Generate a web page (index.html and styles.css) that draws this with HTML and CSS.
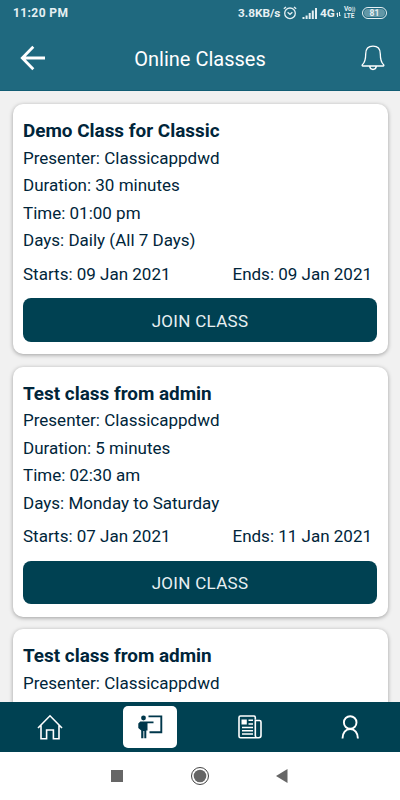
FILE: index.html
```
<!DOCTYPE html>
<html lang="en">
<head>
    <meta charset="UTF-8">
    <meta name="viewport" content="width=device-width, initial-scale=1">
    <title>Online Classes</title>
    <link rel="stylesheet" href="styles.css">
</head>
<body>
    <header>
        <div class="status-bar">
            <span class="clock">11:20 PM</span>
            <span class="speed">3.8KB/s</span>
            <svg class="alarm" width="14" height="14" viewBox="0 0 14 14">
                <circle cx="7" cy="7.3" r="5.3" />
                <path d="M4.6 6.2L7 8.3l2.4-2.1M.8 2.8L3 .9M13.2 2.8L11 .9" />
            </svg>
            <svg class="signal" width="16" height="12" viewBox="0 0 16 12">
                <path d="M.5 10h2v2h-2zM3.6 8.500h2V12h-2zM6.700 6h2v6h-2zM9.800 3.500h2V12h-2zM13 1h2v11h-2z" />
            </svg>
            <span class="network">4G</span>
            <svg class="data" width="5" height="5" viewBox="0 0 5 5">
                <path d="M1.500 5V1L.3 2.200M3.500 0v4l1.200-1.200" />
            </svg>
            <span class="volte"><span>Vo<i>))</i></span><span>LTE</span></span>
            <span class="battery"><span>81</span></span>
        </div>
        <div class="title-bar">
            <svg class="back" width="26" height="26" viewBox="0 0 26 26">
                <path d="M25 13H2.500M13.300 1.800L2.300 13l11 11.200" />
            </svg>
            <h1>Online Classes</h1>
            <svg class="bell" width="24" height="26" viewBox="0 0 24 26">
                <path d="M12 1.200c-4.700 0-7.300 3.200-7.300 7.800 0 5.500-.7 8.500-3.400 10.800-.4.500-.2 1.200.5 1.200h20.400c.7 0 .9-.7.5-1.200-2.700-2.300-3.400-5.300-3.400-10.800 0-4.600-2.600-7.800-7.300-7.800zM8.600 21.200c.3 2 1.500 3.300 3.400 3.300s3.100-1.300 3.400-3.300" />
            </svg>
        </div>
    </header>

    <main>
        <div class="card">
            <h2>Demo Class for Classic</h2>
            <p>Presenter: Classicappdwd</p>
            <p>Duration: 30 minutes</p>
            <p>Time: 01:00 pm</p>
            <p>Days: Daily (All 7 Days)</p>
            <div class="dates">
                <span>Starts: 09 Jan 2021</span>
                <span>Ends: 09 Jan 2021</span>
            </div>
            <button>JOIN CLASS</button>
        </div>
        <div class="card">
            <h2>Test class from admin</h2>
            <p>Presenter: Classicappdwd</p>
            <p>Duration: 5 minutes</p>
            <p>Time: 02:30 am</p>
            <p>Days: Monday to Saturday</p>
            <div class="dates">
                <span>Starts: 07 Jan 2021</span>
                <span>Ends: 11 Jan 2021</span>
            </div>
            <button>JOIN CLASS</button>
        </div>
        <!-- Cut off by the tab bar -->
        <div class="card">
            <h2>Test class from admin</h2>
            <p>Presenter: Classicappdwd</p>
        </div>
    </main>

    <nav class="tabs">
        <a class="tab">
            <svg width="28" height="28" viewBox="0 0 28 28">
                <path d="M2 15L14 2.800 26 15M5 12.500v13.200h5.600v-8.700h6.800v8.700H23V12.500" />
            </svg>
        </a>
        <a class="tab active">
            <svg width="26" height="26" viewBox="0 0 26 26">
                <circle class="solid" cx="6.500" cy="4" r="2.400" />
                <path class="solid" d="M3.300 7.500H16.500v1.700H10.500v7.300H9.300v7.800H7.300v-7.300h-.9v7.300H4.200V16.500L1.300 14V9.500z" />
                <path d="M11.500 2.400h12.800v15.900H12.500" />
            </svg>
        </a>
        <a class="tab">
            <svg width="26" height="26" viewBox="0 0 26 26">
                <path d="M18.300 5.500V3.500c0-1-.5-1.500-1.500-1.500H3.500C2.500 2 2 2.500 2 3.500v18.700c0 1 .6 1.600 1.600 1.600h18.200c1.400 0 2.200-.8 2.200-2.200V8c0-1-.5-1.500-1.500-1.500h-4.200v15c0 1.500.8 2.300 2 2.300" />
                <path class="solid" d="M4.500 5.500h5.300v5H4.500z" />
                <path d="M11.500 6.200H16M11.500 10H16M5 13.500h11M5 16.800h11M5 20h11" />
            </svg>
        </a>
        <a class="tab person">
            <svg width="24" height="26" viewBox="0 0 24 26">
                <circle cx="12.200" cy="8.500" r="6.300" />
                <path d="M4.500 24.500c0-5.500 3.200-9.500 7.700-9.500s7.700 4 7.700 9.500" />
            </svg>
        </a>
    </nav>

    <footer class="system-nav">
        <svg width="14" height="14" viewBox="0 0 14 14"><path d="M1 1h12v12H1z" /></svg>
        <svg width="20" height="20" viewBox="0 0 20 20"><circle class="ring" cx="10" cy="10" r="8.500" /><circle cx="10" cy="10" r="6.300" /></svg>
        <svg width="14" height="16" viewBox="0 0 14 16"><path d="M1 8l11.500-7v14z" /></svg>
    </footer>
</body>
</html>
```
FILE: styles.css
```
* {
    box-sizing: border-box;
}
body {
    display: flex;
    flex-direction: column;
    height: 100vh;
    margin: 0;
    overflow: hidden;
    background-color: #f1f1f1;
    color: #00253a;
    font-family: Roboto, sans-serif;
}
svg {
    flex: none;
    fill: none;
    stroke: #fff;
}
header {
    flex: none;
    height: 91px;
    background-color: #1f697f;
    border-bottom: 1px solid #125d74;
    color: #fff;
}
.status-bar {
    display: flex;
    align-items: center;
    height: 25px;
    padding: 0 13px;
    font-size: 12px;
    font-weight: bold;
    color: #e6f0f3;
}
.status-bar svg {
    stroke: #e6f0f3;
}
.status-bar .alarm {
    stroke-width: 1.3;
}
.clock {
    flex: 1;
    letter-spacing: 0.4px;
}
.speed {
    width: 45px;
    font-size: 11.8px;
}
.signal {
    margin-left: 5px;
}
.status-bar .signal path {
    fill: #e6f0f3;
    stroke: none;
}
.network {
    width: 15px;
    margin-left: 2px;
    font-size: 11.8px;
}
.data {
    align-self: flex-end;
    margin: 0 3px 8px 1px;
}
.volte {
    display: flex;
    flex-direction: column;
    width: 18px;
    font-size: 6.5px;
    line-height: 7px;
}
.volte i {
    font-size: 5px;
    font-style: normal;
    line-height: 1;
}
.battery {
    display: flex;
    width: 25px;
    height: 12px;
    padding: 1px;
    border: 1px solid #e6f0f3;
    border-radius: 6px;
}
.battery span {
    flex: 1;
    border-radius: 4px;
    background-color: #6297a6;
    font-size: 8.5px;
    line-height: 9px;
    text-align: center;
}
.title-bar {
    display: flex;
    align-items: center;
    justify-content: space-between;
    height: 66px;
    padding: 0 15px 0 20px;
}
.back {
    stroke-width: 2.8;
}
.bell {
    stroke-width: 1.3;
}
h1 {
    margin: 2px 7px 0 0;
    font-size: 20px;
    font-weight: normal;
}
main {
    display: flex;
    flex: 1;
    flex-direction: column;
    gap: 12.5px;
    min-height: 0;
    padding: 13px 12.5px 0;
    overflow: hidden;
}
.card {
    flex: none;
    height: 250px;
    padding: 13px 10.5px 12px;
    border-radius: 10px;
    background-color: #fff;
    box-shadow: 0 1px 4px rgba(0, 0, 0, 0.35);
}
h2 {
    margin: 0;
    font-size: 18.9px;
    line-height: 27.5px;
}
p {
    margin: 0;
    font-size: 17px;
    line-height: 27.5px;
}
.dates {
    display: flex;
    justify-content: space-between;
    margin-top: 6px;
    padding-right: 5px;
    font-size: 17px;
    line-height: 27.5px;
}
button {
    width: 100%;
    height: 43.5px;
    margin-top: 10px;
    padding: 2px 0 0;
    border: none;
    border-radius: 8px;
    background-color: #004152;
    color: #e8f0f2;
    font-family: inherit;
    font-size: 17px;
    letter-spacing: 0.3px;
}
.tabs {
    display: grid;
    flex: none;
    grid-template-columns: repeat(4, 1fr);
    align-items: center;
    justify-items: center;
    height: 50px;
    background-color: #004152;
}
.tab {
    display: flex;
    align-items: center;
    justify-content: center;
    width: 54px;
    height: 42px;
    border-radius: 5px;
}
.tab svg {
    stroke-width: 1.6;
}
.tab .solid {
    fill: #fff;
    stroke: none;
}
.person svg {
    stroke-width: 1.9;
}
.active {
    background-color: #fff;
}
.active svg {
    stroke: #00374b;
    stroke-width: 1.9;
}
.active .solid {
    fill: #00374b;
}
.system-nav {
    display: flex;
    flex: none;
    align-items: center;
    justify-content: space-between;
    height: 48px;
    padding: 0 111px 0 110px;
    background-color: #fff;
}
.system-nav svg {
    fill: #666;
    stroke: none;
}
.system-nav .ring {
    fill: none;
    stroke: #444;
}
```
